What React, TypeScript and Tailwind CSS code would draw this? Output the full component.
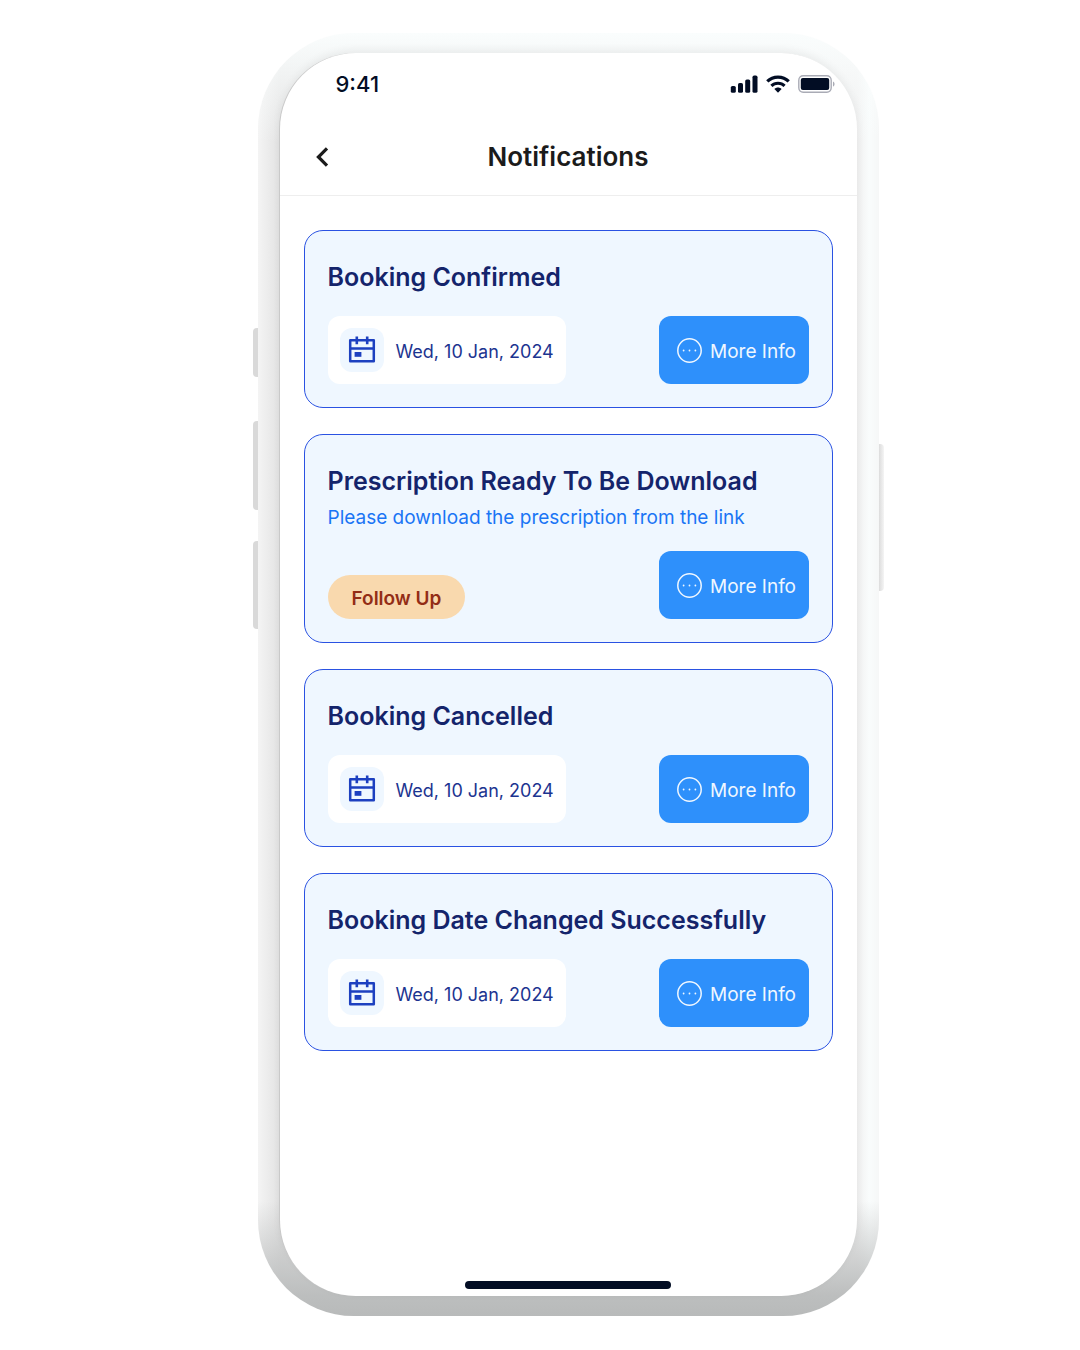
import { clsx } from 'clsx'

type Notification = {
  title: string
  description?: string
  date?: string
  tag?: string
}

const NOTIFICATIONS: Notification[] = [
  { title: 'Booking Confirmed', date: 'Wed, 10 Jan, 2024' },
  {
    title: 'Prescription Ready To Be Download',
    description: 'Please download the prescription from the link',
    tag: 'Follow Up',
  },
  { title: 'Booking Cancelled', date: 'Wed, 10 Jan, 2024' },
  { title: 'Booking Date Changed Successfully', date: 'Wed, 10 Jan, 2024' },
]

function SignalIcon() {
  return (
    <svg width="28" height="18" viewBox="0 0 28 18" fill="currentColor">
      <rect x="0.8" y="11" width="5" height="6.8" rx="1.6" />
      <rect x="8" y="8" width="5" height="9.8" rx="1.6" />
      <rect x="15.2" y="4.4" width="5" height="13.4" rx="1.6" />
      <rect x="22.5" y="0.6" width="5" height="17.2" rx="1.6" />
    </svg>
  )
}

function WifiIcon() {
  return (
    <svg width="24" height="18" viewBox="0 0 24 18" fill="none">
      <path
        d="M1.3 6.4C7 0.7 17 0.7 22.7 6.4"
        stroke="currentColor"
        strokeWidth="3.2"
      />
      <path
        d="M5.4 10.9C9 7.3 15 7.3 18.6 10.9"
        stroke="currentColor"
        strokeWidth="3"
      />
      <path
        d="M8.4 13.9C10.4 11.9 13.6 11.9 15.6 13.9L12.5 17.2Q12 17.7 11.5 17.2Z"
        fill="currentColor"
      />
    </svg>
  )
}

function BatteryIcon() {
  return (
    <svg width="38" height="18" viewBox="0 0 38 18" fill="none">
      <rect
        x="0.8"
        y="0.8"
        width="32.4"
        height="16.4"
        rx="4.4"
        stroke="#a9abb5"
        strokeWidth="1.4"
      />
      <rect x="2.8" y="3" width="28.4" height="12" rx="2" fill="currentColor" />
      <path d="M35 6.4C37 7.4 37 10.6 35 11.6Z" fill="#a9abb5" />
    </svg>
  )
}

function CalendarIcon() {
  return (
    <svg width="28" height="28" viewBox="0 0 28 28" fill="none">
      <path
        d="M2.2 4.2H25.8V25.2H2.2ZM2.2 12.4H25.8"
        stroke="currentColor"
        strokeWidth="2.5"
        strokeLinejoin="round"
      />
      <path d="M8.8 0.6V8.2M19.2 0.6V8.2" stroke="currentColor" strokeWidth="2.6" />
      <rect x="6.6" y="16" width="6.8" height="4.8" fill="currentColor" />
    </svg>
  )
}

function MoreIcon() {
  return (
    <svg width="25" height="25" viewBox="0 0 25 25" fill="none">
      <circle cx="12.5" cy="12.5" r="11.7" stroke="currentColor" strokeWidth="1.5" />
      <circle cx="6.6" cy="12.5" r="0.9" fill="currentColor" />
      <circle cx="12.5" cy="12.5" r="0.9" fill="currentColor" />
      <circle cx="18.4" cy="12.5" r="0.9" fill="currentColor" />
    </svg>
  )
}

function StatusBar() {
  return (
    <div className="flex h-[61px] items-center justify-between pl-14 pr-[21px] text-[#020d24]">
      <span className="text-[22px] font-medium leading-7">9:41</span>
      <div className="flex items-center gap-2">
        <SignalIcon />
        <WifiIcon />
        <BatteryIcon />
      </div>
    </div>
  )
}

function NotificationCard({ title, description, date, tag }: Notification) {
  return (
    <li className="rounded-[19px] border border-[#2a52e2] bg-[#eff7ff] p-[23px]">
      <h2 className="whitespace-nowrap text-[25px] font-semibold leading-[46px] text-[#14246b]">
        {title}
      </h2>
      {description && (
        <p className="whitespace-nowrap text-[19px] leading-[27px] text-[#1a75f5]">
          {description}
        </p>
      )}

      <div
        className={clsx(
          'flex items-end justify-between',
          description ? 'mt-5' : 'mt-4',
        )}
      >
        {date && (
          <div className="flex h-[68px] items-center gap-3 rounded-xl bg-white px-3">
            <span className="flex size-11 items-center justify-center rounded-xl bg-[#eff7ff] text-[#1d40c0]">
              <CalendarIcon />
            </span>
            <time
              dateTime="2024-01-10"
              className="whitespace-nowrap pt-1 text-[18px] leading-7 text-[#1c3490]"
            >
              {date}
            </time>
          </div>
        )}
        {tag && (
          <span className="flex h-11 items-center rounded-full bg-[#f9d9ae] px-6 pt-1 text-[19px] font-semibold text-[#932d16]">
            {tag}
          </span>
        )}
        <button
          type="button"
          className="flex h-[68px] w-[150px] items-center justify-center gap-2 whitespace-nowrap rounded-xl bg-[#2e90fb] pl-1.5 text-[19px] leading-7 text-[#eff7ff]"
        >
          <MoreIcon />
          <span className="pt-1">More Info</span>
        </button>
      </div>
    </li>
  )
}

export default function App() {
  return (
    <div className="flex min-h-screen justify-center bg-white pb-[34px] pl-14 pt-[33px] font-['Inter',sans-serif]">
      <div className="relative flex w-full max-w-[621px] flex-col rounded-[96px] bg-[linear-gradient(to_bottom,#fafdfd_0,#fafdfd00_110px),linear-gradient(to_top,#b8baba_0,#bcbebe_20px,#b8baba00_115px),linear-gradient(to_right,#f4f4f4_0,#e2e2e2_22px,#f0f0f0_calc(100%-22px),#f9fcfc_calc(100%-10px),#f6f7f7_100%)] px-[22px] py-5">
        <span className="absolute -left-[5px] top-[295px] h-[49px] w-[5px] rounded-l-sm bg-[#d9d9d9]" />
        <span className="absolute -left-[5px] top-[388px] h-[89px] w-[5px] rounded-l bg-[#d9d9d9]" />
        <span className="absolute -left-[5px] top-[508px] h-[88px] w-[5px] rounded-l bg-[#d9d9d9]" />
        <span className="absolute -right-[5px] top-[411px] h-[147px] w-[5px] rounded-r bg-linear-to-r from-[#dcdcdc] to-[#f5f5f5]" />

        <div className="flex grow flex-col rounded-[76px] bg-white shadow-[-1px_0_0_#c9c9c9,0_-3px_8px_rgba(0,0,0,0.06)]">
          <StatusBar />
          <header className="grid h-[82px] grid-cols-[48px_1fr_48px] items-center border-b border-[#eeeeee] px-6 pt-1">
            <button
              type="button"
              aria-label="Back"
              className="flex size-9 items-center justify-center text-[#1b1b1b]"
            >
              <svg width="14" height="20" viewBox="0 0 14 20" fill="none">
                <path d="M12 1.4L3.4 10L12 18.6" stroke="currentColor" strokeWidth="3.2" />
              </svg>
            </button>
            <h1 className="text-center text-[26px] font-semibold leading-8 text-[#1b1b1b]">
              Notifications
            </h1>
          </header>

          <main className="grow px-6 pt-[34px]">
            <ul className="flex flex-col gap-[26px]">
              {NOTIFICATIONS.map((item) => (
                <NotificationCard key={item.title} {...item} />
              ))}
            </ul>
          </main>

          <div className="mx-auto mb-[7px] mt-6 h-2 w-[206px] rounded-full bg-[#020d24]" />
        </div>
      </div>
    </div>
  )
}
